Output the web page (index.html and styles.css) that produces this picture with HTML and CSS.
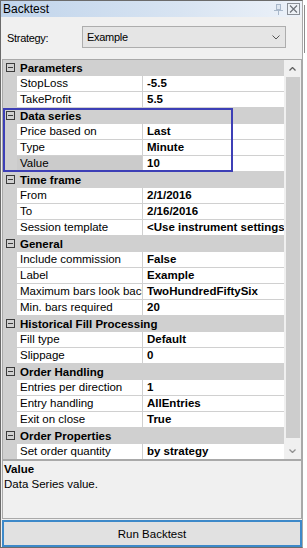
FILE: index.html
```html
<!DOCTYPE html>
<html lang="en">

<head>
    <meta charset="UTF-8">
    <meta name="viewport" content="width=device-width, initial-scale=1.0">
    <title>Backtest</title>
    <link rel="stylesheet" href="styles.css">
</head>

<body>
    <div class="screen">
        <div class="window">
            <div class="titlebar">
                <span class="title">Backtest</span>
                <span class="title-buttons">
                    <svg class="pin" width="11" height="11" viewBox="0 0 11 11">
                        <rect x="3.5" y="0.5" width="4" height="5" fill="#dfe7f1" stroke="#a9b8ca" />
                        <path d="M1 6.5h9M5.5 7v4" stroke="#a9b8ca" />
                    </svg>
                    <svg class="close" width="13" height="12" viewBox="0 0 13 12">
                        <rect x="0.5" y="0.5" width="12" height="11" fill="#eef2f7" stroke="#8a8f96" />
                        <path d="M3 2.5l7 7M10 2.5l-7 7" stroke="#6e737a" stroke-width="1.2" />
                    </svg>
                </span>
            </div>

            <div class="strategy">
                <span class="strategy-label">Strategy:</span>
                <div class="combo">
                    <span>Example</span>
                    <svg width="8" height="5" viewBox="0 0 8 5">
                        <path d="M0.5 0.5l3.5 3.5 3.5-3.5" fill="none" stroke="#555" />
                    </svg>
                </div>
            </div>

            <div class="grid">
                <div class="rows">
                    <div class="group">
                        <div class="category">
                            <svg width="9" height="9" viewBox="0 0 9 9"><rect x="0.5" y="0.5" width="8" height="8" fill="none" stroke="#3c3c3c" /><path d="M2 4.5h5" stroke="#3c3c3c" /></svg>
                            Parameters
                        </div>
                        <div class="row"><span class="name">StopLoss</span><span class="value">-5.5</span></div>
                        <div class="row"><span class="name">TakeProfit</span><span class="value">5.5</span></div>
                    </div>
                    <div class="group marked">
                        <div class="category">
                            <svg width="9" height="9" viewBox="0 0 9 9"><rect x="0.5" y="0.5" width="8" height="8" fill="none" stroke="#3c3c3c" /><path d="M2 4.5h5" stroke="#3c3c3c" /></svg>
                            Data series
                        </div>
                        <div class="row"><span class="name">Price based on</span><span class="value">Last</span></div>
                        <div class="row"><span class="name">Type</span><span class="value">Minute</span></div>
                        <div class="row selected"><span class="name">Value</span><span class="value">10</span></div>
                    </div>
                    <div class="group">
                        <div class="category">
                            <svg width="9" height="9" viewBox="0 0 9 9"><rect x="0.5" y="0.5" width="8" height="8" fill="none" stroke="#3c3c3c" /><path d="M2 4.5h5" stroke="#3c3c3c" /></svg>
                            Time frame
                        </div>
                        <div class="row"><span class="name">From</span><span class="value">2/1/2016</span></div>
                        <div class="row"><span class="name">To</span><span class="value">2/16/2016</span></div>
                        <div class="row"><span class="name">Session template</span><span class="value">&lt;Use instrument settings&gt;</span></div>
                    </div>
                    <div class="group">
                        <div class="category">
                            <svg width="9" height="9" viewBox="0 0 9 9"><rect x="0.5" y="0.5" width="8" height="8" fill="none" stroke="#3c3c3c" /><path d="M2 4.5h5" stroke="#3c3c3c" /></svg>
                            General
                        </div>
                        <div class="row"><span class="name">Include commission</span><span class="value">False</span></div>
                        <div class="row"><span class="name">Label</span><span class="value">Example</span></div>
                        <div class="row"><span class="name">Maximum bars look back</span><span class="value">TwoHundredFiftySix</span></div>
                        <div class="row"><span class="name">Min. bars required</span><span class="value">20</span></div>
                    </div>
                    <div class="group">
                        <div class="category">
                            <svg width="9" height="9" viewBox="0 0 9 9"><rect x="0.5" y="0.5" width="8" height="8" fill="none" stroke="#3c3c3c" /><path d="M2 4.5h5" stroke="#3c3c3c" /></svg>
                            Historical Fill Processing
                        </div>
                        <div class="row"><span class="name">Fill type</span><span class="value">Default</span></div>
                        <div class="row"><span class="name">Slippage</span><span class="value">0</span></div>
                    </div>
                    <div class="group">
                        <div class="category">
                            <svg width="9" height="9" viewBox="0 0 9 9"><rect x="0.5" y="0.5" width="8" height="8" fill="none" stroke="#3c3c3c" /><path d="M2 4.5h5" stroke="#3c3c3c" /></svg>
                            Order Handling
                        </div>
                        <div class="row"><span class="name">Entries per direction</span><span class="value">1</span></div>
                        <div class="row"><span class="name">Entry handling</span><span class="value">AllEntries</span></div>
                        <div class="row"><span class="name">Exit on close</span><span class="value">True</span></div>
                    </div>
                    <div class="group">
                        <div class="category">
                            <svg width="9" height="9" viewBox="0 0 9 9"><rect x="0.5" y="0.5" width="8" height="8" fill="none" stroke="#3c3c3c" /><path d="M2 4.5h5" stroke="#3c3c3c" /></svg>
                            Order Properties
                        </div>
                        <div class="row"><span class="name">Set order quantity</span><span class="value">by strategy</span></div>
                    </div>
                </div>

                <div class="scrollbar">
                    <div class="arrow">
                        <svg width="7" height="4" viewBox="0 0 7 4"><path d="M0.5 3.5l3-3 3 3" fill="none" stroke="#606060" stroke-width="1.3" /></svg>
                    </div>
                    <div class="track"><div class="thumb"></div></div>
                    <div class="arrow">
                        <svg width="7" height="4" viewBox="0 0 7 4"><path d="M0.5 0.5l3 3 3-3" fill="none" stroke="#909090" stroke-width="1.3" /></svg>
                    </div>
                </div>
            </div>

            <div class="description">
                <div class="desc-title">Value</div>
                <div>Data Series value.</div>
            </div>

            <button class="run">Run Backtest</button>
        </div>
        <div class="neighbour">
            <div class="neighbour-edge"></div>
        </div>
    </div>
</body>

</html>
```

FILE: styles.css
```css
body {
    margin: 0px;
    padding: 0px;
    font-family: "Liberation Sans", Arial, sans-serif;
    font-size: 11.5px;
    color: #000;
    background-color: #fff;
}

.screen {
    display: flex;
    width: 307px;
    height: 548px;
    overflow: hidden;
}

.window {
    width: 303px;
    height: 548px;
    box-sizing: border-box;
    border: 1px solid #6b6b6b;
    border-right-color: #a8a8a8;
    background-color: #f0f0f0;
    display: flex;
    flex-direction: column;
}

/* title bar */

.titlebar {
    height: 16px;
    flex-shrink: 0;
    display: flex;
    align-items: center;
    justify-content: space-between;
    padding-left: 2px;
    background: linear-gradient(to right, #c0d4eb 0%, #d8e4f2 60%, #edf2f9 100%);
}

.title {
    font-size: 12px;
    line-height: 15px;
}

.title-buttons {
    display: flex;
    align-items: center;
    gap: 3px;
    padding-right: 2px;
}

/* strategy selector */

.strategy {
    height: 42px;
    flex-shrink: 0;
    box-sizing: border-box;
    padding: 9px 0 0 6px;
    display: flex;
    align-items: flex-start;
}

.strategy-label {
    width: 75px;
    line-height: 22px;
    font-size: 11px;
    letter-spacing: -0.3px;
    padding-top: 1px;
}

.combo {
    width: 204px;
    height: 22px;
    box-sizing: border-box;
    border: 1px solid #adadad;
    background-color: #e5e5e5;
    display: flex;
    align-items: center;
    justify-content: space-between;
    padding: 0 5px 0 4px;
    font-size: 11px;
    letter-spacing: -0.3px;
}

/* property grid */

.grid {
    height: 401px;
    flex-shrink: 0;
    margin-left: 1px;
    box-sizing: border-box;
    border: 1px solid #a9a9a9;
    display: flex;
}

.rows {
    width: 281px;
    height: 399px;
    overflow: hidden;
    background-color: #d0d0d0;
}

.group.marked {
    position: relative;
}

.group.marked::after {
    content: "";
    position: absolute;
    left: 0px;
    top: 0px;
    width: 230px;
    height: 64px;
    box-sizing: border-box;
    border: 2px solid #3d3fb6;
}

.category {
    height: 15px;
    margin-bottom: 1px;
    padding-left: 3px;
    display: flex;
    align-items: center;
    gap: 5px;
    font-weight: bold;
    white-space: nowrap;
}

.row {
    height: 15px;
    margin-bottom: 1px;
    padding-left: 14px;
    display: flex;
    line-height: 15px;
}

.name,
.value {
    white-space: nowrap;
    overflow: hidden;
    background-color: #fff;
    box-sizing: border-box;
}

.name {
    width: 125px;
    flex-shrink: 0;
    padding-left: 3px;
}

.value {
    flex: 1;
    margin-left: 1px;
    padding-left: 4px;
    font-weight: bold;
}

.row.selected .name {
    background-color: #cbcbcb;
}

.scrollbar {
    width: 17px;
    display: flex;
    flex-direction: column;
    background-color: #f0f0f0;
}

.arrow {
    height: 17px;
    display: flex;
    align-items: center;
    justify-content: center;
}

.track {
    flex: 1;
    padding: 0px 1px 4px 2px;
}

.thumb {
    height: 100%;
    background-color: #cdcdcd;
}

/* description */

.description {
    height: 59px;
    flex-shrink: 0;
    margin-left: 1px;
    box-sizing: border-box;
    border: 1px solid #a9a9a9;
    padding: 1px 0 0 1px;
    line-height: 15px;
}

.desc-title {
    font-weight: bold;
}

.run {
    height: 27px;
    width: 300px;
    margin: 1px 0 0 1px;
    border: 2px solid #3d89c9;
    background-color: #e1e1e1;
    font-family: "Liberation Sans", Arial, sans-serif;
    font-size: 11.5px;
    color: #000;
    padding: 0;
}

/* the next docked panel, just its edge */

.neighbour {
    flex: 1;
    background-color: #fff;
}

.neighbour-edge {
    width: 1px;
    height: 48px;
    margin: 5px 0 0 1px;
    background-color: #8c8c8c;
}
```
